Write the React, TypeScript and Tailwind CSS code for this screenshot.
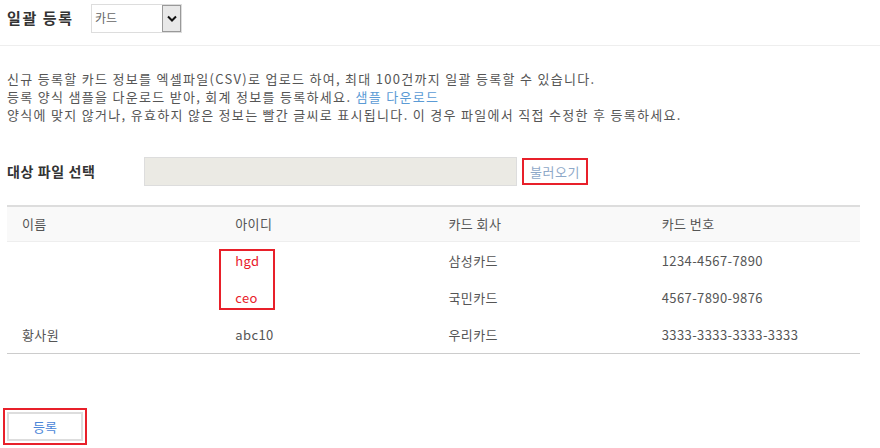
import React from "react";

const rows = [
  { name: "", id: "hgd", company: "삼성카드", number: "1234-4567-7890", err: true },
  { name: "", id: "ceo", company: "국민카드", number: "4567-7890-9876", err: true },
  { name: "황사원", id: "abc10", company: "우리카드", number: "3333-3333-3333-3333", err: false },
];

export default function App() {
  return (
    <div
      className="w-[880px] h-[448px] bg-white text-[#555] overflow-hidden"
      style={{ fontFamily: '"Malgun Gothic", "Noto Sans CJK KR", "Noto Sans", sans-serif' }}
    >
      <div className="flex items-center h-[35px] pl-[7px] pt-[1px]">
        <span className="text-[15px] font-bold text-[#333] w-[84px] tracking-[1.6px]">일괄 등록</span>
        <div className="flex h-[29px] w-[91px] border border-[#ddd]">
          <div className="flex-1 flex items-center pl-[3px] text-[12px] text-[#666]">카드</div>
          <div className="w-[19px] bg-[#e8e8e8] border border-[#999] flex items-center justify-center">
            <svg width="10" height="7" viewBox="0 0 10 7">
              <path d="M1 1.5 L5 5.5 L9 1.5" stroke="#111" strokeWidth="2" fill="none" />
            </svg>
          </div>
        </div>
      </div>
      <div className="h-[11px] border-b border-[#eee]" />
      <div className="pl-[7px] pt-[24px] text-[13px] leading-[18px] tracking-[1.3px] text-[#555]">
        <p>신규 등록할 카드 정보를 엑셀파일(CSV)로 업로드 하여, 최대 100건까지 일괄 등록할 수 있습니다.</p>
        <p>
          등록 양식 샘플을 다운로드 받아, 회계 정보를 등록하세요.{" "}
          <span className="text-[#5b9bd5]">샘플 다운로드</span>
        </p>
        <p>양식에 맞지 않거나, 유효하지 않은 정보는 빨간 글씨로 표시됩니다. 이 경우 파일에서 직접 수정한 후 등록하세요.</p>
      </div>
      <div className="flex items-center mt-[33px] pl-[7px] h-[29px]">
        <span className="w-[137px] text-[14px] font-bold text-[#333] tracking-[0.6px]">대상 파일 선택</span>
        <div className="w-[373px] h-[29px] bg-[#ebeae4] border border-[#ddd]" />
        <div className="ml-[5px] h-[27px] w-[66px] border-2 border-[#e8202a] flex items-center justify-center text-[13px] tracking-[0.5px] text-[#8ea8c8]">
          불러오기
        </div>
      </div>
      <div className="relative mt-[19px] ml-[7px] w-[853px] border-t-2 border-[#ddd] border-b border-b-[#ccc]">
        <div className="grid grid-cols-4 h-[35px] bg-[#f9f9f9] border-b border-[#eee] text-[13px] tracking-[0.4px] text-[#555] items-center">
          <div className="pl-[15px]">이름</div>
          <div className="pl-[15px]">아이디</div>
          <div className="pl-[15px]">카드 회사</div>
          <div className="pl-[15px]">카드 번호</div>
        </div>
        {rows.map((r, i) => (
          <div key={i} className="grid grid-cols-4 h-[37px] items-center text-[13px] tracking-[0.4px] text-[#555]">
            <div className="pl-[15px]">{r.name}</div>
            <div className={"pl-[15px] " + (r.err ? "text-[#e8202a]" : "")}>{r.id}</div>
            <div className="pl-[15px]">{r.company}</div>
            <div className="pl-[15px]">{r.number}</div>
          </div>
        ))}
        <div className="absolute left-[212px] top-[42px] w-[56px] h-[61px] border-2 border-[#e8202a]" />
      </div>
      <div className="mt-[54px] ml-[3px] w-[84px] h-[37px] border-2 border-[#e8202a] p-[2px]">
        <div className="w-full h-full border-2 border-[#ddd] flex items-center justify-center text-[13px] text-[#4a86d8]">
          등록
        </div>
      </div>
    </div>
  );
}
